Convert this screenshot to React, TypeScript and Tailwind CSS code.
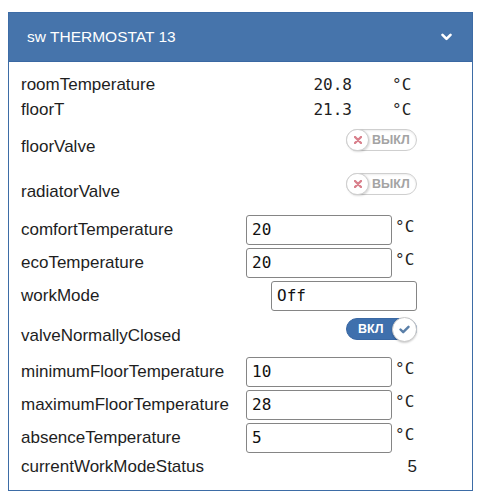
import React from "react";

const sans = { fontFamily: '"Liberation Sans", Arial, sans-serif' } as React.CSSProperties;
const mono = { fontFamily: '"DejaVu Sans Mono", monospace' } as React.CSSProperties;

function ToggleOff() {
  return (
    <div className="relative w-[71px] h-[22px] rounded-full border border-[#cfcfcf] bg-white shadow-[inset_0_1px_2px_rgba(0,0,0,0.08)]">
      <div className="absolute left-[-1px] top-[-1px] w-[23px] h-[22px] rounded-full bg-white border border-[#cfcfcf] shadow-[1px_1px_2px_rgba(0,0,0,0.15)] flex items-center justify-center">
        <svg width="8" height="8" viewBox="0 0 8 8">
          <path d="M1 1L7 7M7 1L1 7" stroke="#d9808c" strokeWidth="2.4" strokeLinecap="round" />
        </svg>
      </div>
      <span
        className="absolute left-[25px] top-[2px] text-[12.5px] leading-[16px] font-bold text-[#a3a3a3]"
        style={sans}
      >
        ВЫКЛ
      </span>
    </div>
  );
}

function ToggleOn() {
  return (
    <div className="relative w-[71px] h-[22px] rounded-full bg-[#3f70ad] border border-[#3a68a3]">
      <span
        className="absolute left-[11px] top-[2px] text-[12.5px] leading-[16px] font-bold text-white"
        style={sans}
      >
        ВКЛ
      </span>
      <div className="absolute right-[-1px] top-[-2px] w-[25px] h-[25px] rounded-full bg-white border border-[#c8c8c8] shadow-[0_1px_2px_rgba(0,0,0,0.2)] flex items-center justify-center">
        <svg width="11" height="9" viewBox="0 0 11 9">
          <path d="M1.5 4.5L4.2 7.2L9.5 1.8" stroke="#5a7fa8" strokeWidth="2.4" fill="none" strokeLinecap="round" strokeLinejoin="round" />
        </svg>
      </div>
    </div>
  );
}

function Label({ children }: { children: React.ReactNode }) {
  return (
    <span className="text-[17px] leading-[20px] text-[#1e1e1e]" style={sans}>
      {children}
    </span>
  );
}

function ValueRow({ label, value }: { label: string; value: string }) {
  return (
    <div className="flex h-[25px] items-center">
      <Label>{label}</Label>
      <div className="ml-auto flex items-center text-[16px] leading-[20px] text-[#1e1e1e]" style={mono}>
        <span>{value}</span>
        <span className="ml-[40px] w-[25px]">°C</span>
      </div>
    </div>
  );
}

function ToggleRow({ label, on, h, tTop, lTop }: { label: string; on: boolean; h: string; tTop: string; lTop: string }) {
  return (
    <div className={`flex items-start ${h}`}>
      <div className={lTop}>
        <Label>{label}</Label>
      </div>
      <div className={`ml-auto ${tTop}`}>{on ? <ToggleOn /> : <ToggleOff />}</div>
    </div>
  );
}

function InputRow({ label, value, unit = true }: { label: string; value: string; unit?: boolean }) {
  return (
    <div className="flex h-[33px] items-center">
      <Label>{label}</Label>
      <div className="ml-auto flex items-center">
        <div
          className="w-[146px] h-[30px] border border-[#858585] rounded-[3px] bg-white pl-[5px] flex items-center text-[16px] text-[#111]"
          style={mono}
        >
          {value}
        </div>
        {unit ? (
          <span className="self-start mt-[2px] ml-[3px] w-[22px] text-[16px] leading-[20px] text-[#1e1e1e]" style={mono}>
            °C
          </span>
        ) : null}
      </div>
    </div>
  );
}

export default function App() {
  return (
    <div className="w-[481px] h-[500px] bg-white pt-[12px] px-[8px]" style={sans}>
      <div className="border border-[#3d6ca6] bg-white">
        <div className="h-[49px] bg-[#4674ab] border-b border-[#3a68a2] flex items-center pl-[18px] pr-[20px]">
          <span className="text-white text-[15.5px] leading-[20px]" style={sans}>
            sw THERMOSTAT 13
          </span>
          <svg className="ml-auto" width="11" height="8" viewBox="0 0 11 8">
            <path d="M1.5 1.8L5.5 5.8L9.5 1.8" stroke="white" strokeWidth="2.6" fill="none" strokeLinecap="round" strokeLinejoin="round" />
          </svg>
        </div>
        <div className="pl-[12px] pr-[55px] pt-[10px] pb-[10px]">
          <ValueRow label="roomTemperature" value="20.8" />
          <ValueRow label="floorT" value="21.3" />
          <ToggleRow label="floorValve" on={false} h="h-[45px]" tTop="mt-[7px]" lTop="mt-[13px]" />
          <ToggleRow label="radiatorValve" on={false} h="h-[46px]" tTop="mt-[6px]" lTop="mt-[13px]" />
          <InputRow label="comfortTemperature" value="20" />
          <InputRow label="ecoTemperature" value="20" />
          <div className="flex h-[33px] items-center">
            <Label>workMode</Label>
            <div
              className="ml-auto w-[146px] h-[30px] border border-[#858585] rounded-[3px] bg-white pl-[5px] flex items-center text-[16px] text-[#111]"
              style={mono}
            >
              Off
            </div>
          </div>
          <ToggleRow label="valveNormallyClosed" on={true} h="h-[43px]" tTop="mt-[6px]" lTop="mt-[12px]" />
          <InputRow label="minimumFloorTemperature" value="10" />
          <InputRow label="maximumFloorTemperature" value="28" />
          <InputRow label="absenceTemperature" value="5" />
          <div className="flex h-[26px] items-center">
            <Label>currentWorkModeStatus</Label>
            <span className="ml-auto text-[17px] leading-[20px] text-[#1e1e1e]" style={sans}>
              5
            </span>
          </div>
        </div>
      </div>
    </div>
  );
}
